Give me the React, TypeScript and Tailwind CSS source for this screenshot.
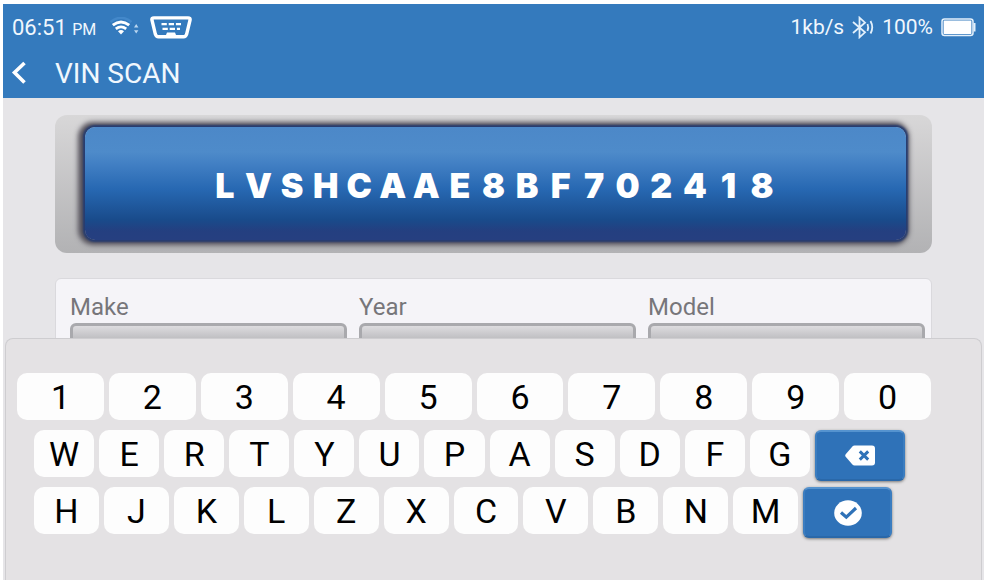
import { useState } from 'react'

const NUMBER_KEYS = ['1', '2', '3', '4', '5', '6', '7', '8', '9', '0']
const TOP_KEYS = ['W', 'E', 'R', 'T', 'Y', 'U', 'P', 'A', 'S', 'D', 'F', 'G']
const BOTTOM_KEYS = ['H', 'J', 'K', 'L', 'Z', 'X', 'C', 'V', 'B', 'N', 'M']
const FIELDS = ['Make', 'Year', 'Model']
const VIN_LENGTH = 17

function WifiIcon() {
  return (
    <svg className="w-[30px] h-[20px]" viewBox="0 0 30 20" fill="none">
      <path d="M0.5 5Q11 -3.5 21.5 5" stroke="#4388ca" strokeWidth="2.4" />
      <path d="M2.8 8.2Q11 1.6 19.2 8.2" stroke="#fff" strokeWidth="2.9" />
      <path d="M5.8 11.9Q11 7.8 16.2 11.9" stroke="#fff" strokeWidth="2.7" />
      <path d="M8 14.2Q11 12 14 14.2L11 17.6Z" fill="#fff" />
      <path d="M24 10.5l2.2-3.4 2.2 3.4zM24 13.2l2.2 3.4 2.2-3.4z" fill="#b9d6f0" />
    </svg>
  )
}

function ObdIcon() {
  return (
    <svg className="w-[42px] h-[23px]" viewBox="0 0 42 23" fill="none">
      <path
        d="M4 1.9H38Q40.6 1.9 40 4.2L36.6 18.3Q35.8 20.8 33.6 20.8H8.4Q6.2 20.8 5.4 18.3L2 4.2Q1.4 1.9 4 1.9Z"
        stroke="#fff"
        strokeWidth="3.4"
        strokeLinejoin="round"
      />
      <path d="M15 21.5L17 16.5H25L27 21.5Z" fill="#fff" />
      <path d="M11.5 8.2H31M12.5 12.8H30" stroke="#fff" strokeWidth="2.2" strokeDasharray="5.3 1.9" />
    </svg>
  )
}

function BluetoothIcon() {
  return (
    <svg className="w-[22px] h-[23px]" viewBox="0 0 22 23" fill="none" stroke="#e3f0fb" strokeWidth="1.8">
      <path d="M1 6L13 16.3L7.5 21.3V1.7L13 6.7L1 17" />
      <path d="M15.5 8Q17 11.5 15.5 15" />
      <path d="M18.5 5Q22 11.5 18.5 17.5" />
    </svg>
  )
}

function BatteryIcon() {
  return (
    <svg className="w-[35px] h-[19px]" viewBox="0 0 35 19" fill="none">
      <rect x="1" y="1" width="31" height="16.5" rx="2.5" stroke="#e3f0fb" strokeWidth="1.5" />
      <rect x="2.6" y="2.6" width="27.8" height="13.3" rx="0.5" fill="#fff" />
      <path d="M32.5 5H34.5V13.5H32.5Z" fill="#e3f0fb" />
    </svg>
  )
}

function BackspaceIcon() {
  return (
    <svg className="w-[30px] h-[21px]" viewBox="0 0 30 21" fill="none">
      <path d="M9.5 0.5H27Q30 0.5 30 3.5V17.5Q30 20.5 27 20.5H9.5Q8.3 20.5 7.4 19.6L0.7 11.8Q-0.3 10.5 0.7 9.2L7.4 1.4Q8.3 0.5 9.5 0.5Z" fill="#fff" />
      <path d="M14.8 6.4L23.2 14.6M23.2 6.4L14.8 14.6" stroke="#2f72b8" strokeWidth="3" />
    </svg>
  )
}

function ConfirmIcon() {
  return (
    <svg className="w-[28px] h-[26px]" viewBox="0 0 28 26" fill="none">
      <ellipse cx="14" cy="13" rx="13.8" ry="12.8" fill="#fff" />
      <path d="M7 12.5L12.3 17.2L22 8" stroke="#2f72b8" strokeWidth="3.2" />
    </svg>
  )
}

function Key({ value, onPress, className }: { value: string, onPress: (value: string) => void, className: string }) {
  return (
    <button
      type="button"
      onClick={() => onPress(value)}
      className={`${className} basis-0 min-w-0 h-full rounded-[10px] bg-[#fdfdfd] pt-px text-[34px] leading-none text-black`}
    >
      {value}
    </button>
  )
}

export default function App() {
  const [vin, setVin] = useState<string>('LVSHCAAE8BF702418')

  const keyHandler = (value: string) => {
    vin.length < VIN_LENGTH && setVin(vin + value)
  }
  const deleteHandler = () => {
    setVin(vin.slice(0, -1))
  }

  return (
    <div className="min-h-screen bg-white pt-1 pl-[3px] pr-1 font-[Roboto,sans-serif]">
      <div className="bg-[#e6e5e8] overflow-hidden">
        <header className="bg-[#347abd] text-[#f0f7fd] h-[94px]">
          <div className="flex items-center justify-between h-[46px] pl-[9px] pr-2">
            <div className="flex items-center">
              <p className="text-[22px]">06:51 <span className="text-[16px]">PM</span></p>
              <div className="flex items-center gap-[10px] pl-[14px]">
                <WifiIcon />
                <ObdIcon />
              </div>
            </div>
            <div className="flex items-center gap-2 text-[21px]">
              <span className="pt-[2px]">1kb/s</span>
              <BluetoothIcon />
              <span className="pt-[2px]">100%</span>
              <BatteryIcon />
            </div>
          </div>
          <div className="flex items-center h-[46px] pl-2">
            <button type="button" aria-label="Back" className="w-[44px]">
              <svg className="w-4 h-6" viewBox="0 0 16 24" fill="none">
                <path d="M13.5 2L3.5 11.5L13.5 21.5" stroke="#fff" strokeWidth="3.6" />
              </svg>
            </button>
            <h1 className="pt-px text-[28px]">VIN SCAN</h1>
          </div>
        </header>

        <main className="h-60 overflow-hidden pt-[17px] pl-[52px] pr-[52px]">
          <div className="h-[138px] rounded-xl bg-linear-to-b from-[#d8d7d8] to-[#b2b2b4] pt-3 pb-3 pl-[30px] pr-[26px]">
            <div className="flex h-[113px] items-center justify-center rounded-[10px] bg-[linear-gradient(#4c88c8,#4e8bca_22%,#3f7dc2_35%,#2768b2_55%,#194b8b_82%,#243f80_92%,#263f80)] shadow-[0_0_2px_2px_#263c70,-2px_0_5px_5px_#55525c]">
              <output aria-label="VIN" className="flex w-[70%] pt-1 pr-1 font-[Inter,sans-serif] text-[34px] font-black leading-none text-white">
                {vin.split('').map((letter, i) => <span key={i} className="flex-1 text-center">{letter}</span>)}
              </output>
            </div>
          </div>
          <form className="mt-[25px] grid grid-cols-3 gap-3 rounded-md border border-[#dad9dd] bg-[#f5f4f8] pt-3 pb-4 pl-[14px] pr-[6px]">
            {FIELDS.map((field) => (
              <div key={field}>
                <label htmlFor={field} className="block text-[24px] leading-8 text-[#77767a]">{field}</label>
                <input
                  id={field}
                  type="text"
                  className="block h-10 w-full rounded-md border-3 border-[#a9a9ad] bg-linear-to-b from-[#dddcdf] to-[#8e8e92] px-2"
                />
              </div>
            ))}
          </form>
        </main>

        <section aria-label="Keyboard" className="mx-[2px] flex h-[242px] flex-col gap-[10px] rounded-t-lg border border-b-0 border-[#cecdd0] bg-[#e4e2e4] pt-[34px]">
          <div className="flex h-[47px] gap-[5px] pl-[11px] pr-[50px]">
            {NUMBER_KEYS.map((key) => <Key key={key} value={key} onPress={keyHandler} className="grow" />)}
          </div>
          <div className="flex h-[47px] items-start gap-[5px] pl-7 pr-[76px]">
            {TOP_KEYS.map((key) => <Key key={key} value={key} onPress={keyHandler} className="grow-60" />)}
            <button
              type="button"
              aria-label="Delete"
              onClick={deleteHandler}
              className="flex h-[51px] grow-86 basis-0 items-center justify-center rounded-md border-2 border-t-[#5593cf] border-x-[#3b7dc0] border-b-[#2a68a9] bg-[#2f72b8] shadow-[0_1px_3px_#777]"
            >
              <BackspaceIcon />
            </button>
          </div>
          <div className="flex h-[47px] items-start gap-[5px] pl-7 pr-[89px]">
            {BOTTOM_KEYS.map((key) => <Key key={key} value={key} onPress={keyHandler} className="grow-65" />)}
            <button
              type="button"
              aria-label="Confirm"
              className="flex h-[51px] grow-85 basis-0 items-center justify-center rounded-md border-2 border-t-[#5593cf] border-x-[#3b7dc0] border-b-[#2a68a9] bg-[#2f72b8] shadow-[0_1px_3px_#777]"
            >
              <ConfirmIcon />
            </button>
          </div>
        </section>
      </div>
    </div>
  )
}
